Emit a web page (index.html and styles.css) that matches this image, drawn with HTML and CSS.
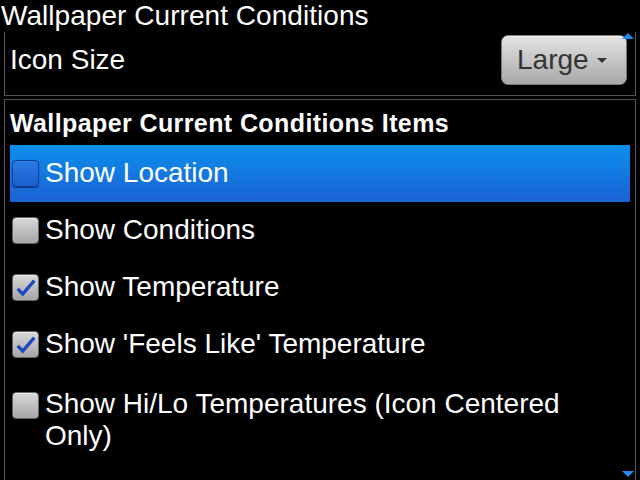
FILE: index.html
```html
<html><head>
  <title>Wallpaper Current Conditions</title>
  <link rel="stylesheet" href="styles.css">
</head>
<body>
  <main class="screen">
    <h1 class="page-title">Wallpaper Current Conditions</h1>

    <section class="panel size-panel">
      <span class="scroll-up"></span>
      <span class="field-label">Icon Size</span>
      <button class="drop-button">Large<span class="caret"></span></button>
    </section>

    <section class="panel items-panel">
      <h2 class="items-title">Wallpaper Current Conditions Items</h2>
      <ul class="item-list">
        <li class="item selected">
          <span class="check-box"></span>
          <span class="item-text">Show Location</span>
        </li>
        <li class="item">
          <span class="check-box"></span>
          <span class="item-text">Show Conditions</span>
        </li>
        <li class="item">
          <span class="check-box">
            <svg viewBox="0 0 27 27"><polyline points="5,15 10.5,20.5 23,6"/></svg>
          </span>
          <span class="item-text">Show Temperature</span>
        </li>
        <li class="item">
          <span class="check-box">
            <svg viewBox="0 0 27 27"><polyline points="5,15 10.5,20.5 23,6"/></svg>
          </span>
          <span class="item-text">Show 'Feels Like' Temperature</span>
        </li>
        <li class="item wrap">
          <span class="check-box"></span>
          <span class="item-text">Show Hi/Lo Temperatures (Icon Centered Only)</span>
        </li>
      </ul>
      <span class="scroll-down"></span>
    </section>
  </main>
</body></html>
```

FILE: styles.css
```css
/* BlackBerry style settings screen */
body {
  margin: 0;
  height: 480px;
  overflow: hidden;
  background: #000;
  color: #fff;
  font-family: "Liberation Sans", Arial, sans-serif;
}

.screen {
  display: flex;
  flex-direction: column;
  height: 480px;
}

.page-title {
  margin: 0;
  padding-left: 1px;
  font-size: 28px;
  font-weight: normal;
  line-height: 32px;
  letter-spacing: 0.05px;
}

.panel {
  position: relative;
  margin: 0 4px;
  border: 1px solid #555;
  box-sizing: border-box;
}

.size-panel {
  display: flex;
  justify-content: space-between;
  align-items: flex-start;
  height: 64px;
  padding: 3px 8px 0 5px;
  border-top: none;
}

.field-label {
  font-size: 28px;
  line-height: 50px;
}

.drop-button {
  display: flex;
  align-items: center;
  gap: 8px;
  width: 126px;
  height: 50px;
  padding: 0 0 0 15px;
  border: 1px solid #7a7a7a;
  border-radius: 7px;
  background: linear-gradient(#e4e4e4, #a8a8a8);
  box-shadow: inset 0 1px 0 #f6f6f6;
  color: #333;
  font-family: "Liberation Sans", Arial, sans-serif;
  font-size: 28px;
}

.caret {
  width: 0;
  height: 0;
  border-left: 5px solid transparent;
  border-right: 5px solid transparent;
  border-top: 5px solid #333;
}

.scroll-up {
  position: absolute;
  top: 1px;
  right: 1px;
  width: 0;
  height: 0;
  border-left: 6px solid transparent;
  border-right: 6px solid transparent;
  border-bottom: 6px solid #1e8cf0;
}

.scroll-down {
  position: absolute;
  bottom: 3px;
  right: 1px;
  width: 0;
  height: 0;
  border-left: 6px solid transparent;
  border-right: 6px solid transparent;
  border-top: 6px solid #1e8cf0;
}

.items-panel {
  flex: 1;
  margin-top: 3px;
  padding: 0 5px;
  border-bottom: none;
}

.items-title {
  margin: 8px 0 7px;
  font-size: 25px;
  font-weight: bold;
  line-height: 30px;
  letter-spacing: 0.4px;
}

.item-list {
  margin: 0;
  padding: 0;
  list-style: none;
}

.item {
  display: flex;
  align-items: flex-start;
  gap: 6px;
  padding: 12px 0 13px 2px;
  font-size: 28px;
  line-height: 32px;
}

.item.wrap {
  padding-top: 15px;
}

.item.wrap .check-box {
  margin-top: 4px;
}

.item.selected {
  background: linear-gradient(#0b90ec, #1b62d5);
}

.check-box {
  flex: none;
  width: 27px;
  height: 27px;
  margin-top: 3px;
  box-sizing: border-box;
  border: 1px solid #666;
  border-radius: 4px;
  background: linear-gradient(#d8d8d8, #a6a6a6);
  box-shadow: inset 0 1px 0 #ececec;
}

.selected .check-box {
  border-color: #0c3f94;
  background: linear-gradient(#2b7ce8, #1a5ccc);
  box-shadow: 0 1px 1px #0a3480;
}

.check-box svg {
  display: block;
  width: 25px;
  height: 25px;
}

.check-box polyline {
  fill: none;
  stroke: #1a48c0;
  stroke-width: 3.6;
}
```
